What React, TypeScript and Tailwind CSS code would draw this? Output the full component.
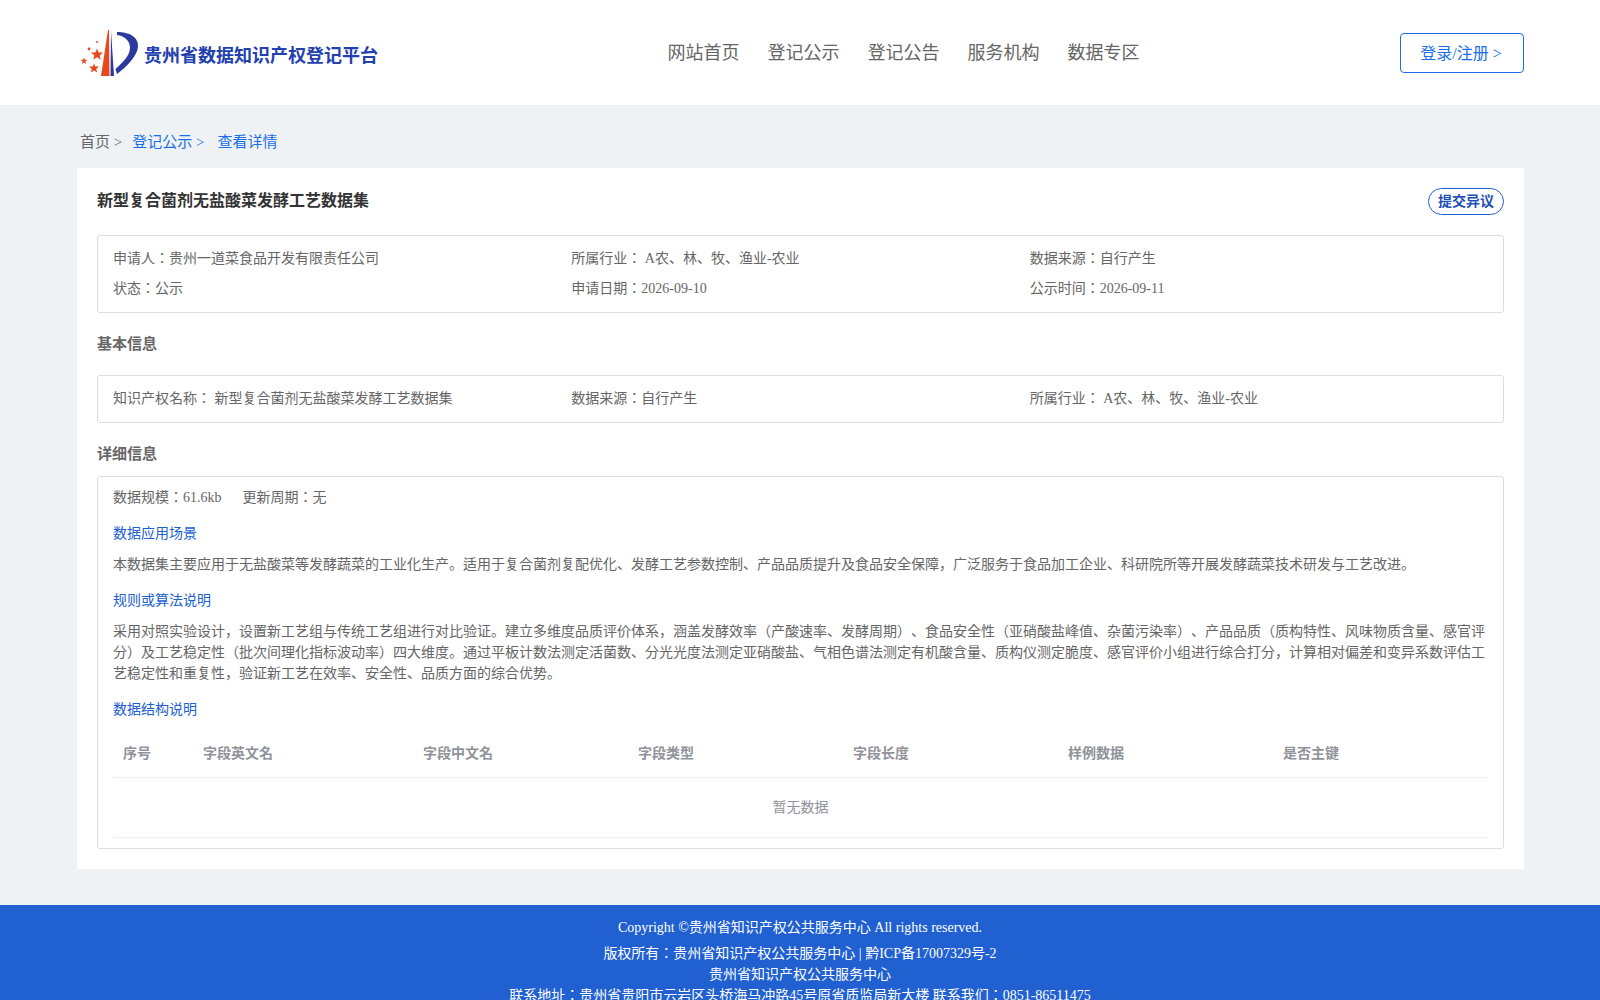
const sans = 'font-["Liberation_Serif","Noto_Sans_CJK_JP",serif]';

const columns = ['序号', '字段英文名', '字段中文名', '字段类型', '字段长度', '样例数据', '是否主键'];

function Logo() {
  return (
    <svg viewBox="2 2 62 56" className="w-[62px] h-[56px] shrink-0">
      <path d="M33 7 L34 7 L34.5 53 L26 53 Z" fill="#e8491a" />
      <path d="M36 8 L39 53 L35.5 53 Z" fill="#2b3a9c" />
      <path d="M42 9 C54 9 64 14 63 24 C62 34 50 45 42 51 L40.5 46 C47 40 55 33 55 25 C55 17 49 13 42 12 Z" fill="#2b3a9c" />
      <polygon points="22,25.5 23.6,29.5 28,29.5 24.6,32.4 25.8,36.8 22,34.2 18.2,36.8 19.4,32.4 16,29.5 20.4,29.5" fill="#e8491a" />
      <polygon points="19,40.5 20.3,43.6 24,43.6 21.2,45.9 22.2,49.5 19,47.4 15.8,49.5 16.8,45.9 14,43.6 17.7,43.6" fill="#e8491a" />
      <polygon points="9,34.5 9.9,36.8 12.4,36.8 10.4,38.4 11.2,41 9,39.5 6.8,41 7.6,38.4 5.6,36.8 8.1,36.8" fill="#e8491a" />
      <circle cx="14" cy="26" r="1.4" fill="#e8491a" />
      <circle cx="22" cy="19" r="1" fill="#e8491a" />
    </svg>
  );
}

export default function App() {
  return (
    <div className={`${sans} [text-spacing-trim:space-all] bg-[#eff2f5] text-sm text-[#666]`}>
      <header className="h-[105px] bg-white">
        <div className="w-[1447px] ml-[77px] flex items-center justify-between h-full">
          <div className="flex items-center gap-[5px] w-[300px]">
            <Logo />
            <span className="text-lg font-bold text-[#2340b0] whitespace-nowrap pt-[6px]">贵州省数据知识产权登记平台</span>
          </div>
          <nav className="flex gap-7 text-lg text-[#666] mt-[1px] ml-[30px]">
            <a>网站首页</a>
            <a>登记公示</a>
            <a>登记公告</a>
            <a>服务机构</a>
            <a>数据专区</a>
          </nav>
          <button className="w-[124px] h-10 border border-[#1a6fe8] rounded text-base text-[#1a6fe8] bg-white mt-[1px] pt-[2px] pr-[2px]">
            登录/注册 &gt;
          </button>
        </div>
      </header>

      <main className="w-[1447px] ml-[77px] pb-9">
        <div className="h-[63px] pt-[27px] pl-[3px] text-[15px] leading-5 flex items-start">
          <span>首页 &gt;</span>
          <span className="ml-[10px] text-[#1a6fe8]">登记公示 &gt;</span>
          <span className="ml-[13px] text-[#1a6fe8]">查看详情</span>
        </div>

        <div className="bg-white px-5 pt-5 pb-5">
          <div className="flex items-start justify-between h-[47px]">
            <h1 className="text-base font-bold text-[#333] mt-[1px]">新型复合菌剂无盐酸菜发酵工艺数据集</h1>
            <button className="h-[27px] w-[76px] border border-[#2060d0] rounded-[14px] text-sm font-bold text-[#2050b8]">提交异议</button>
          </div>

          <div className="border border-[#ddd] rounded-[3px] px-[15px] pt-[8px] h-[78px] grid grid-cols-3 auto-rows-[30px] items-center">
            <div>申请人：贵州一道菜食品开发有限责任公司</div>
            <div>所属行业： A农、林、牧、渔业-农业</div>
            <div>数据来源：自行产生</div>
            <div>状态：公示</div>
            <div>申请日期：2026-09-10</div>
            <div>公示时间：2026-09-11</div>
          </div>

          <h2 className="font-bold text-[15px] h-[62px] pt-[2px] flex items-center">基本信息</h2>

          <div className="border border-[#ddd] rounded-[3px] px-[15px] h-12 grid grid-cols-3 items-center">
            <div>知识产权名称： 新型复合菌剂无盐酸菜发酵工艺数据集</div>
            <div>数据来源：自行产生</div>
            <div>所属行业： A农、林、牧、渔业-农业</div>
          </div>

          <h2 className="font-bold text-[15px] h-[53px] flex items-center pt-[11px]">详细信息</h2>

          <div className="border border-[#ddd] rounded-[3px] px-[15px] pt-[10px] pb-[10px]">
            <div className="leading-[21px]">
              <span>数据规模：61.6kb</span>
              <span className="ml-[21px]">更新周期：无</span>
            </div>
            <h3 className="mt-[15px] text-[#2060d0] leading-[21px]">数据应用场景</h3>
            <p className="mt-[10px] leading-[21px]">
              本数据集主要应用于无盐酸菜等发酵蔬菜的工业化生产。适用于复合菌剂复配优化、发酵工艺参数控制、产品品质提升及食品安全保障，广泛服务于食品加工企业、科研院所等开展发酵蔬菜技术研发与工艺改进。
            </p>
            <h3 className="mt-[15px] text-[#2060d0] leading-[21px]">规则或算法说明</h3>
            <p className="mt-[10px] leading-[21px]">
              采用对照实验设计，设置新工艺组与传统工艺组进行对比验证。建立多维度品质评价体系，涵盖发酵效率（产酸速率、发酵周期）、食品安全性（亚硝酸盐峰值、杂菌污染率）、产品品质（质构特性、风味物质含量、感官评分）及工艺稳定性（批次间理化指标波动率）四大维度。通过平板计数法测定活菌数、分光光度法测定亚硝酸盐、气相色谱法测定有机酸含量、质构仪测定脆度、感官评价小组进行综合打分，计算相对偏差和变异系数评估工艺稳定性和重复性，验证新工艺在效率、安全性、品质方面的综合优势。
            </p>
            <h3 className="mt-[15px] text-[#2060d0] leading-[21px]">数据结构说明</h3>
            <div className="mt-[9px]">
              <div className="grid grid-cols-[80px_220px_215px_215px_215px_215px_1fr] h-[49px] pt-[2px] items-center border-b border-[#ebeef5] font-bold text-[#909399]">
                {columns.map((c) => (
                  <div key={c} className="px-[10px]">{c}</div>
                ))}
              </div>
              <div className="h-[60px] flex items-center justify-center border-b border-[#ebeef5] text-[#909399]">暂无数据</div>
            </div>
          </div>
        </div>
      </main>

      <footer className="bg-[#2060d0] text-white text-center pt-[12px] pb-[10px] leading-[21px]">
        <div className="mb-[5px]">Copyright ©贵州省知识产权公共服务中心 All rights reserved.</div>
        <div>版权所有：贵州省知识产权公共服务中心 | 黔ICP备17007329号-2</div>
        <div>贵州省知识产权公共服务中心</div>
        <div>联系地址：贵州省贵阳市云岩区头桥海马冲路45号原省质监局新大楼 联系我们：0851-86511475</div>
      </footer>
    </div>
  );
}
